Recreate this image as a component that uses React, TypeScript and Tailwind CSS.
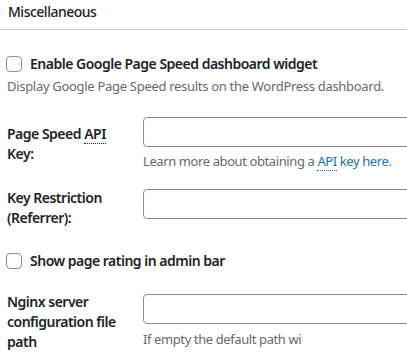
import React from 'react'

const Checkbox = () => (
  <span className="inline-block w-4 h-4 shrink-0 rounded-[4px] border border-[#8c8f94] bg-white" />
)

const Abbr = ({ className }: { className?: string }) => (
  <abbr
    title="Application Programming Interface"
    className={`no-underline border-b border-dotted ${className ?? ''}`}
  >
    API
  </abbr>
)

export default function App() {
  return (
    <div
      className="w-[407px] h-[358px] overflow-hidden bg-white text-[#1d2327] text-[14px] tracking-[-0.5px]"
      style={{ fontFamily: '"Noto Sans", "Open Sans", sans-serif' }}
    >
      <div className="h-[30px] border-b border-[#c3c4c7] pl-[8px] pt-[2px] leading-[20px] font-medium">
        Miscellaneous
      </div>

      {/* dashboard widget */}
      <label className="mt-[24px] pl-[6px] flex items-center gap-[8px] leading-[20px] font-semibold">
        <Checkbox />
        Enable Google Page Speed dashboard widget
      </label>
      <div className="mt-[2px] pl-[7px] text-[13px] tracking-[-0.3px] leading-[20px] text-[#646970]">
        Display Google Page Speed results on the WordPress dashboard.
      </div>

      {/* api key */}
      <div className="mt-[21px] flex">
        <div className="w-[143px] shrink-0 pl-[7px] pt-[7px] leading-[20px] font-semibold">
          Page Speed <Abbr className="border-[#1d2327]" />
          <br />
          Key:
        </div>
        <div className="flex flex-col">
          <input className="w-[300px] h-[30px] rounded-[4px] border border-[#8c8f94] bg-white" />
          <div className="mt-[4px] text-[13px] tracking-[-0.4px] leading-[20px] text-[#646970] whitespace-nowrap">
            Learn more about obtaining a{' '}
            <a className="text-[#2271b1]">
              <Abbr className="border-[#2271b1]" /> key here.
            </a>
          </div>
        </div>
      </div>

      {/* referrer */}
      <div className="mt-[17px] flex">
        <div className="w-[143px] shrink-0 pl-[7px] leading-[20px] font-semibold">
          Key Restriction
          <br />
          (Referrer):
        </div>
        <div className="pt-[1px]">
          <input className="w-[300px] h-[30px] rounded-[4px] border border-[#8c8f94] bg-white" />
        </div>
      </div>

      {/* admin bar */}
      <label className="mt-[23px] pl-[6px] flex items-center gap-[8px] leading-[20px] font-semibold">
        <Checkbox />
        Show page rating in admin bar
      </label>

      {/* nginx */}
      <div className="mt-[21px] flex">
        <div className="w-[143px] shrink-0 pl-[7px] leading-[20px] font-semibold">
          Nginx server
          <br />
          configuration file
          <br />
          path
        </div>
        <div className="flex flex-col pt-[2px]">
          <input className="w-[300px] h-[30px] rounded-[4px] border border-[#8c8f94] bg-white" />
          <div className="mt-[5px] text-[13px] tracking-[-0.4px] leading-[20px] text-[#646970] whitespace-nowrap">
            If empty the default path wi
          </div>
        </div>
      </div>
    </div>
  )
}
